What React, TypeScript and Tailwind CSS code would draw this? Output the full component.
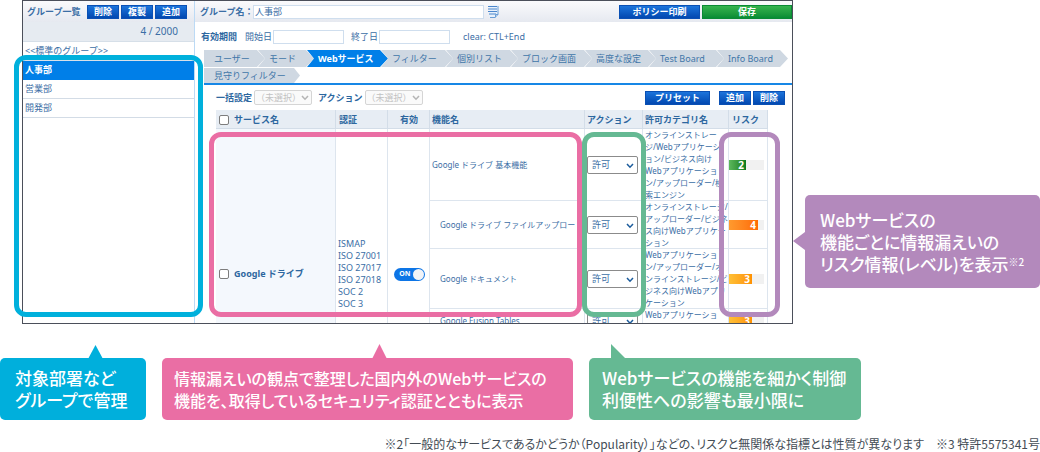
import React from 'react';

const groups = ['人事部', '営業部', '開発部'];

const tabs = [
  { label: 'モード', width: 'w-[56px]' },
  { label: 'Webサービス', width: 'w-[81px]', active: true },
  { label: 'フィルター', width: 'w-[72px]' },
  { label: '個別リスト', width: 'w-[72px]' },
  { label: 'ブロック画面', width: 'w-[81px]' },
  { label: '高度な設定', width: 'w-[71px]' },
  { label: 'Test Board', width: 'w-[75px]' },
  { label: 'Info Board', width: 'w-[71px]' },
];

const features = [
  {
    name: 'Google ドライブ 基本機能',
    sub: false,
    lines: ['オンラインストレー', 'ジ/Webアプリケーシ', 'ョン/ビジネス向け', 'Webアプリケーショ', 'ン/アップローダー/検', '索エンジン'],
    risk: 2,
  },
  {
    name: 'Google ドライブ ファイルアップロード',
    sub: true,
    lines: ['オンラインストレージ/', 'アップローダー/ビジネ', 'ス向けWebアプリケー', 'ション'],
    risk: 4,
  },
  {
    name: 'Google ドキュメント',
    sub: true,
    lines: ['Webアプリケーショ', 'ン/アップローダー/オ', 'ンラインストレージ/ビ', 'ジネス向けWebアプリ', 'ケーション'],
    risk: 3,
  },
  {
    name: 'Google Fusion Tables',
    sub: true,
    lines: ['Webアプリケーショ', 'ン'],
    risk: 3,
  },
];

const riskStyles: Record<number, string> = {
  2: 'w-[17px] from-[#5cb85c] to-[#067a1c]',
  3: 'w-[23px] from-[#ffc035] to-[#ff9100]',
  4: 'w-[29px] from-[#ff9a2e] to-[#ff6a00]',
};

const cell = 'p-0 shadow-[inset_-1px_-1px_#dde5ee]';
const headCell = 'p-0 text-left font-bold shadow-[inset_-1px_-1px_#d3dde8]';
const checkbox = 'h-[10px] w-[10px] shrink-0 appearance-none rounded-[2px] border border-[#7d7d7d] bg-white';
const field = 'h-[14px] border border-[#cfdeee] bg-white px-px leading-[12px] text-[#3b6ea5] outline-none';

const BlueButton = ({ label, className }: { label: string; className: string }) => (
  <button
    className={`flex h-[14px] items-center justify-center border border-[#0a50b4] bg-linear-to-b from-[#1c74dc] to-[#0348b0] font-bold leading-none text-white ${className}`}
  >
    {label}
  </button>
);

const Chevron = ({ className }: { className: string }) => (
  <svg viewBox="0 0 8 6" className={`pointer-events-none absolute h-[6px] w-[8px] ${className}`} fill="none" stroke="currentColor" strokeWidth="1.5">
    <path d="M1 1l3 3.2L7 1" />
  </svg>
);

const BulkSelect = ({ label, id }: { label: string; id: string }) => (
  <div className="flex items-center gap-[2px]">
    <label htmlFor={id} className="font-bold text-[#2d679f]">{label}</label>
    <div className="relative">
      <select id={id} disabled className="block h-[15px] w-[58px] appearance-none rounded-[2px] border border-[#d5d5d5] bg-[#fafafa] pl-px leading-[13px] text-[#c2c2c2]">
        <option>（未選択）</option>
      </select>
      <Chevron className="right-[3px] top-[5px] text-[#b5b5b5]" />
    </div>
  </div>
);

const Sidebar = () => (
  <aside className="w-[172px] shrink-0 border-r border-[#bcdaf5]">
    <div className="flex h-[21px] items-center justify-between bg-linear-to-b from-[#fafafc] to-[#e6e9f0] pl-1 pr-[7px]">
      <h2 className="font-bold">グループ一覧</h2>
      <div className="flex gap-[2px]">
        <BlueButton label="削除" className="w-[32px]" />
        <BlueButton label="複製" className="w-[32px]" />
        <BlueButton label="追加" className="w-[32px]" />
      </div>
    </div>
    <p className="h-[20px] border-b border-[#d6dfe8] bg-[#e6ebf1] pr-4 text-right text-[10px] leading-[19px]">4 / 2000</p>
    <p className="h-[19px] border-b border-[#d9e1e9] pl-[2px] leading-[18px]">&lt;&lt;標準のグループ&gt;&gt;</p>
    <ul>
      {groups.map((group, i) => (
        <li
          key={group}
          className={i === 0 ? 'h-[19px] bg-[#007fe8] pl-[2px] font-bold leading-[18px] text-white' : 'h-[19px] border-b border-[#d3dce6] pl-[2px] leading-[18px]'}
        >
          {group}
        </li>
      ))}
    </ul>
  </aside>
);

const Tabs = () => (
  <nav className="ml-[9px] border-b-2 border-[#1787e6]">
    <div className="flex">
      <button className="-mr-[7px] h-[17px] w-[61px] bg-[#cfd8e2] pl-[10px] text-left text-[#3f76a8] [clip-path:polygon(0_0,calc(100%-8px)_0,100%_50%,calc(100%-8px)_100%,0_100%)]">
        ユーザー
      </button>
      {tabs.map((tab) => (
        <button
          key={tab.label}
          className={`-mr-[7px] h-[17px] shrink-0 whitespace-nowrap pl-[11px] text-left [clip-path:polygon(0_0,calc(100%-8px)_0,100%_50%,calc(100%-8px)_100%,0_100%,7px_50%)] ${tab.width} ${tab.active ? 'bg-[#007fe8] font-bold text-white' : 'bg-[#cfd8e2] text-[#3f76a8]'}`}
        >
          {tab.label}
        </button>
      ))}
    </div>
    <button className="mt-px block h-[15px] w-[96px] bg-[#cfd8e2] pl-[10px] text-left leading-[15px] text-[#3f76a8] [clip-path:polygon(0_0,calc(100%-6px)_0,100%_50%,calc(100%-6px)_100%,0_100%)]">
      見守りフィルター
    </button>
  </nav>
);

const ServiceTable = () => (
  <table className="w-full table-fixed border-separate border-spacing-0">
    <colgroup>
      <col className="w-[120px]" />
      <col className="w-[52px]" />
      <col className="w-[42px]" />
      <col />
      <col className="w-[58px]" />
      <col className="w-[86px]" />
      <col className="w-[39px]" />
    </colgroup>
    <thead>
      <tr className="h-[19px] bg-[#e7edf4] text-[#2d679f]">
        <th className={headCell}>
          <label className="flex items-center gap-[5px] pl-[3px]">
            <input type="checkbox" className={checkbox} />
            サービス名
          </label>
        </th>
        <th className={`${headCell} pl-[3px]`}>認証</th>
        <th className="p-0 text-center font-bold shadow-[inset_-1px_-1px_#d3dde8]">有効</th>
        <th className={`${headCell} pl-[2px]`}>機能名</th>
        <th className={`${headCell} pl-[2px]`}>アクション</th>
        <th className={`${headCell} pl-[2px]`}>許可カテゴリ名</th>
        <th className={`${headCell} pl-[3px]`}>リスク</th>
      </tr>
    </thead>
    <tbody>
      {features.map((feature, i) => (
        <tr key={feature.name}>
          {i === 0 && (
            <>
              <td rowSpan={5} className={`${cell} bg-[#f4f8fd]`}>
                <label className="flex items-center gap-[5px] pl-[3px] font-bold text-[#2d679f]">
                  <input type="checkbox" className={checkbox} />
                  Google ドライブ
                </label>
              </td>
              <td rowSpan={5} className={`${cell} pl-[2px] leading-[12px]`}>
                ISMAP<br />ISO 27001<br />ISO 27017<br />ISO 27018<br />SOC 2<br />SOC 3
              </td>
              <td rowSpan={5} className={cell}>
                <button
                  role="switch"
                  aria-checked="true"
                  className="mx-auto flex h-[13px] w-[31px] items-center justify-end gap-[2px] rounded-full bg-[#0d75e6] pr-px text-[7px] font-bold text-white"
                >
                  ON
                  <span className="h-[11px] w-[11px] rounded-full bg-[#f1f3f7]" />
                </button>
              </td>
            </>
          )}
          <td className={`${cell} overflow-hidden whitespace-nowrap text-[8px] ${feature.sub ? 'pl-[10px]' : 'pl-[2px]'}`}>
            {feature.name}
          </td>
          <td className={cell}>
            <div className="relative ml-[2px] w-[51px]">
              <select
                aria-label={`${feature.name} アクション`}
                className="block h-[18px] w-full appearance-none rounded-[2px] border border-[#8b8b8b] bg-white pl-1 leading-[16px]"
              >
                <option>許可</option>
                <option>禁止</option>
              </select>
              <Chevron className="right-[4px] top-[7px] text-[#1c5c9c]" />
            </div>
          </td>
          <td className={`${cell} whitespace-nowrap pl-[2px] text-[8px] leading-[12px]`}>
            {feature.lines.map((line) => (
              <div key={line}>{line}</div>
            ))}
          </td>
          <td className={cell}>
            <div className="h-[10px] w-[35px] bg-[#f1f1f1]">
              <div className={`h-full bg-linear-to-r pr-[2px] text-right text-[10px] font-bold leading-[10px] text-white ${riskStyles[feature.risk]}`}>
                {feature.risk}
              </div>
            </div>
          </td>
        </tr>
      ))}
      <tr className="h-[86px]">
        <td colSpan={4} className={cell} />
      </tr>
    </tbody>
  </table>
);

const MainPanel = () => (
  <main className="min-w-0 flex-1">
    <div className="flex h-[21px] items-center bg-linear-to-b from-[#fafafc] to-[#e6e9f0] pl-[5px]">
      <label htmlFor="group-name" className="w-[53px] shrink-0 whitespace-nowrap font-bold">グループ名：</label>
      <input id="group-name" defaultValue="人事部" className={`${field} w-[231px]`} />
      <svg viewBox="0 0 11 13" className="ml-1 h-[13px] w-[11px]" fill="none">
        <path d="M1 .5h9.5v9L8 12.5H1z" fill="#e8f1fb" />
        <path d="M0 1.500h9M0 4h9M0 6.500h9M1 9h7" stroke="#4b86cc" />
        <path d="M10 1v8.500L7 12.500H2M10 9.500H7.500v3" stroke="#6d9fd6" />
      </svg>
      <BlueButton label="ポリシー印刷" className="ml-auto w-[81px]" />
      <button className="ml-[2px] flex h-[14px] w-[90px] items-center justify-center border border-[#0b8a35] bg-linear-to-b from-[#35b44f] to-[#068c34] font-bold leading-none text-white">
        保存
      </button>
    </div>

    {/* Valid period */}
    <div className="flex h-[28px] items-center gap-px pl-[6px] pt-[2px]">
      <span className="mr-[7px] font-bold text-[#2d679f]">有効期間</span>
      <label htmlFor="start-date">開始日</label>
      <input id="start-date" className={`${field} mr-[6px] w-[71px]`} />
      <label htmlFor="end-date">終了日</label>
      <input id="end-date" className={`${field} w-[71px]`} />
      <span className="ml-3">clear: CTL+End</span>
    </div>

    <Tabs />

    {/* Bulk actions */}
    <div className="flex h-[25px] items-center gap-[6px] pl-[21px] pr-[7px]">
      <BulkSelect label="一括設定" id="bulk" />
      <BulkSelect label="アクション" id="bulk-action" />
      <div className="ml-auto flex gap-[2px]">
        <BlueButton label="プリセット" className="mr-[7px] w-[65px]" />
        <BlueButton label="追加" className="w-[32px]" />
        <BlueButton label="削除" className="w-[32px]" />
      </div>
    </div>

    <div className="pl-[21px] pr-6">
      <ServiceTable />
    </div>
  </main>
);

const App = () => {
  return (
    <div className="bg-white font-['Noto_Sans','Noto_Sans_CJK_JP',sans-serif]">
      <div className="flex items-start">
        {/* Admin screen with highlighted areas */}
        <div className="relative ml-[22px] min-w-0 flex-1">
          <div className="flex h-[324px] overflow-hidden border border-[#4b4f5a] bg-white text-[9px] text-[#3b6ea5]">
            <Sidebar />
            <MainPanel />
          </div>
          <div className="pointer-events-none absolute -left-2 top-[55px] h-[262px] w-[189px] rounded-[12px] border-[5px] border-[#00b0dc]" />
          <div className="pointer-events-none absolute left-[187px] right-[211px] top-[132px] h-[185px] rounded-[12px] border-[5px] border-[#ea6ea4]" />
          <div className="pointer-events-none absolute right-[147px] top-[132px] h-[185px] w-[64px] rounded-[12px] border-[5px] border-[#65b993]" />
          <div className="pointer-events-none absolute right-[13px] top-[132px] h-[185px] w-[61px] rounded-[12px] border-[5px] border-[#b389bc]" />
        </div>

        <div className="relative ml-3 mt-[195px] w-[235px] shrink-0 rounded-[5px] bg-[#b389bc] pb-[13px] pl-[15px] pt-[14px] font-['Noto_Sans_CJK_JP',sans-serif] text-[17px] font-medium leading-[22px] text-white [font-feature-settings:'palt']">
          <svg viewBox="0 0 12 18" className="absolute -left-3 top-[37px] h-[18px] w-[12px]">
            <path d="M0 9L12 0v18z" fill="#b389bc" />
          </svg>
          <p className="whitespace-nowrap">
            Webサービスの
            <br />
            機能ごとに情報漏えいの
            <br />
            リスク情報(レベル)を表示<sup className="text-[10px] leading-none">※2</sup>
          </p>
        </div>
      </div>

      {/* Callouts */}
      <div className="mt-[34px] flex gap-4 whitespace-nowrap font-['Noto_Sans_CJK_JP',sans-serif] text-[17px] font-medium leading-[22px] text-white [font-feature-settings:'palt']">
        <div className="relative w-[146px] rounded-[5px] bg-[#00afdc] py-[9px] pl-[15px]">
          <svg viewBox="0 0 15 14" className="absolute -top-[13px] left-[88px] h-[14px] w-[15px]">
            <path d="M7.500 0L15 14H0z" fill="#00afdc" />
          </svg>
          <p>
            対象部署など
            <br />
            グループで管理
          </p>
        </div>
        <div className="relative w-[411px] rounded-[5px] bg-[#ea6ea4] py-[9px] pl-3 text-[16px] leading-[22px]">
          <svg viewBox="0 0 15 15" className="absolute -top-[14px] left-[210px] h-[15px] w-[15px]">
            <path d="M7.500 0L15 15H0z" fill="#ea6ea4" />
          </svg>
          <p>
            情報漏えいの観点で整理した国内外のWebサービスの
            <br />
            機能を、取得しているセキュリティ認証とともに表示
          </p>
        </div>
        <div className="relative w-[272px] rounded-[5px] bg-[#65b993] py-[9px] pl-[13px]">
          <svg viewBox="0 0 15 15" className="absolute -top-[14px] left-[22px] h-[15px] w-[15px]">
            <path d="M0 0L15 15H0z" fill="#65b993" />
          </svg>
          <p>
            Webサービスの機能を細かく制御
            <br />
            利便性への影響も最小限に
          </p>
        </div>
      </div>

      <p className="mt-4 text-right font-['Noto_Sans_CJK_JP',sans-serif] text-[12px] leading-4 text-[#434c55] [font-feature-settings:'palt']">
        ※2「一般的なサービスであるかどうか（Popularity）」などの、リスクと無関係な指標とは性質が異なります　※3 特許5575341号
      </p>
    </div>
  );
};

export default App;
